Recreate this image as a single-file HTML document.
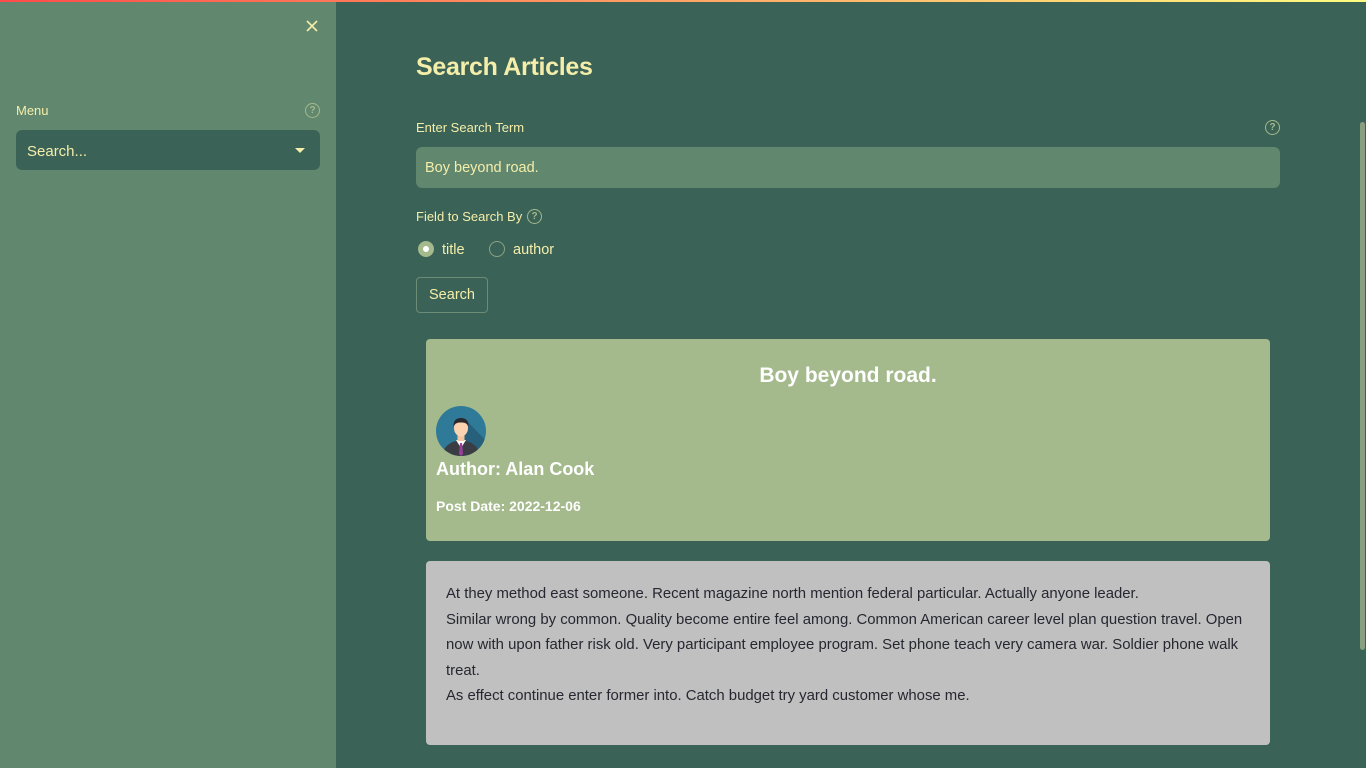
<!DOCTYPE html>
<html><head><meta charset="utf-8"><style>
*{box-sizing:border-box;margin:0;padding:0}
body{width:1366px;height:768px;overflow:hidden;background:#3b6256;font-family:"Liberation Sans",sans-serif;position:relative;color:#f4eeaa}
.top{position:absolute;top:0;left:0;width:1366px;height:2px;background:linear-gradient(90deg,#ff4b4b,#fffd80)}
.side{position:absolute;top:2px;left:0;width:336px;height:766px;background:#61876e}
.q{position:absolute;width:15px;height:15px;border:1.4px solid #a4b98c;border-radius:50%;color:#a4b98c;font-size:10px;font-weight:bold;text-align:center;line-height:13px}
.lbl{position:absolute;font-size:13px;color:#f4eeaa}
.sel{position:absolute;left:16px;top:128px;width:304px;height:40px;background:#3b6256;border-radius:6px;font-size:15px;padding:13px 11px 0;color:#f4eeaa}
.sel:after{content:"";position:absolute;right:15px;top:18px;border:5px solid transparent;border-top:5px solid #f4eeaa}
h1{position:absolute;left:416px;top:53px;font-size:25px;font-weight:bold;color:#f4eeaa;letter-spacing:-0.3px}
.inp{position:absolute;left:416px;top:147px;width:864px;height:41px;background:#61876e;border-radius:6px;font-size:14.5px;padding:13px 9px 0;color:#f4eeaa}
.radio{position:absolute;top:241px;width:16px;height:16px;border-radius:50%}
.btn{position:absolute;left:416px;top:277px;width:72px;height:36px;border:1px solid #6d8c77;border-radius:4px;font-size:14.5px;text-align:center;line-height:35px}
.card{position:absolute;left:426px;top:339px;width:844px;height:202px;background:#a4b98c;border-radius:4px;color:#fff}
.body{position:absolute;left:426px;top:561px;width:844px;height:184px;background:#c0c0c0;border-radius:4px;color:#262730;font-size:14.9px;line-height:25.5px;padding:21px 20px;white-space:nowrap}
.sb{position:absolute;left:1360px;top:122px;width:5px;height:528px;background:#88a07f;border-radius:3px}
</style></head><body>
<div class="top"></div>
<div class="side">
<svg style="position:absolute;left:306px;top:18px" width="12" height="12"><path d="M1 1L11 11M11 1L1 11" stroke="#f4eeaa" stroke-width="1.6"/></svg>
<div class="lbl" style="left:16px;top:101px">Menu</div>
<div class="q" style="left:305px;top:101px">?</div>
<div class="sel">Search...</div>
</div>
<h1>Search Articles</h1>
<div class="lbl" style="left:416px;top:120px">Enter Search Term</div>
<div class="q" style="left:1265px;top:120px">?</div>
<div class="inp">Boy beyond road.</div>
<div class="lbl" style="left:416px;top:209px">Field to Search By</div>
<div class="q" style="left:527px;top:209px">?</div>
<div class="radio" style="left:418px;background:#a4b98c"><div style="position:absolute;left:5px;top:5px;width:6px;height:6px;border-radius:50%;background:#fff"></div></div>
<div class="lbl" style="left:442px;top:242px;font-size:14.5px">title</div>
<div class="radio" style="left:489px;border:1.5px solid #8aa383"></div>
<div class="lbl" style="left:513px;top:242px;font-size:14.5px">author</div>
<div class="btn">Search</div>
<div class="card">
<div style="position:absolute;left:0;width:844px;top:25px;text-align:center;font-size:21px;font-weight:bold">Boy beyond road.</div>
<svg style="position:absolute;left:10px;top:67px" width="50" height="50" viewBox="0 0 50 50">
<defs><clipPath id="c"><circle cx="25" cy="25" r="25"/></clipPath></defs>
<circle cx="25" cy="25" r="25" fill="#2f7a99"/>
<g clip-path="url(#c)">
<path d="M30 14L55 40L40 55L25 40Z" fill="#27607a"/>
<path d="M6 50Q8 36 25 34Q42 36 44 50Z" fill="#3a3d44"/>
<path d="M20 34L25 42L30 34Z" fill="#fff"/>
<path d="M24 37L26 37L27 48L25 50L23 48Z" fill="#9b3f9b"/>
<rect x="21.5" y="28" width="7" height="7" fill="#f3c5a0"/>
<ellipse cx="25" cy="22" rx="7" ry="8.5" fill="#fcd3b0"/>
<path d="M17.5 21Q17 12 25 12Q33 12 32.5 21Q31 16 25 16.5Q19 16 17.5 21Z" fill="#2a2a2e"/>
</g></svg>
<div style="position:absolute;left:10px;top:120px;font-size:18px;font-weight:bold">Author: Alan Cook</div>
<div style="position:absolute;left:10px;top:159px;font-size:14px;font-weight:bold">Post Date: 2022-12-06</div>
</div>
<div class="body">At they method east someone. Recent magazine north mention federal particular. Actually anyone leader.<br>Similar wrong by common. Quality become entire feel among. Common American career level plan question travel. Open<br>now with upon father risk old. Very participant employee program. Set phone teach very camera war. Soldier phone walk<br>treat.<br>As effect continue enter former into. Catch budget try yard customer whose me.</div>
<div class="sb"></div>
</body></html>
